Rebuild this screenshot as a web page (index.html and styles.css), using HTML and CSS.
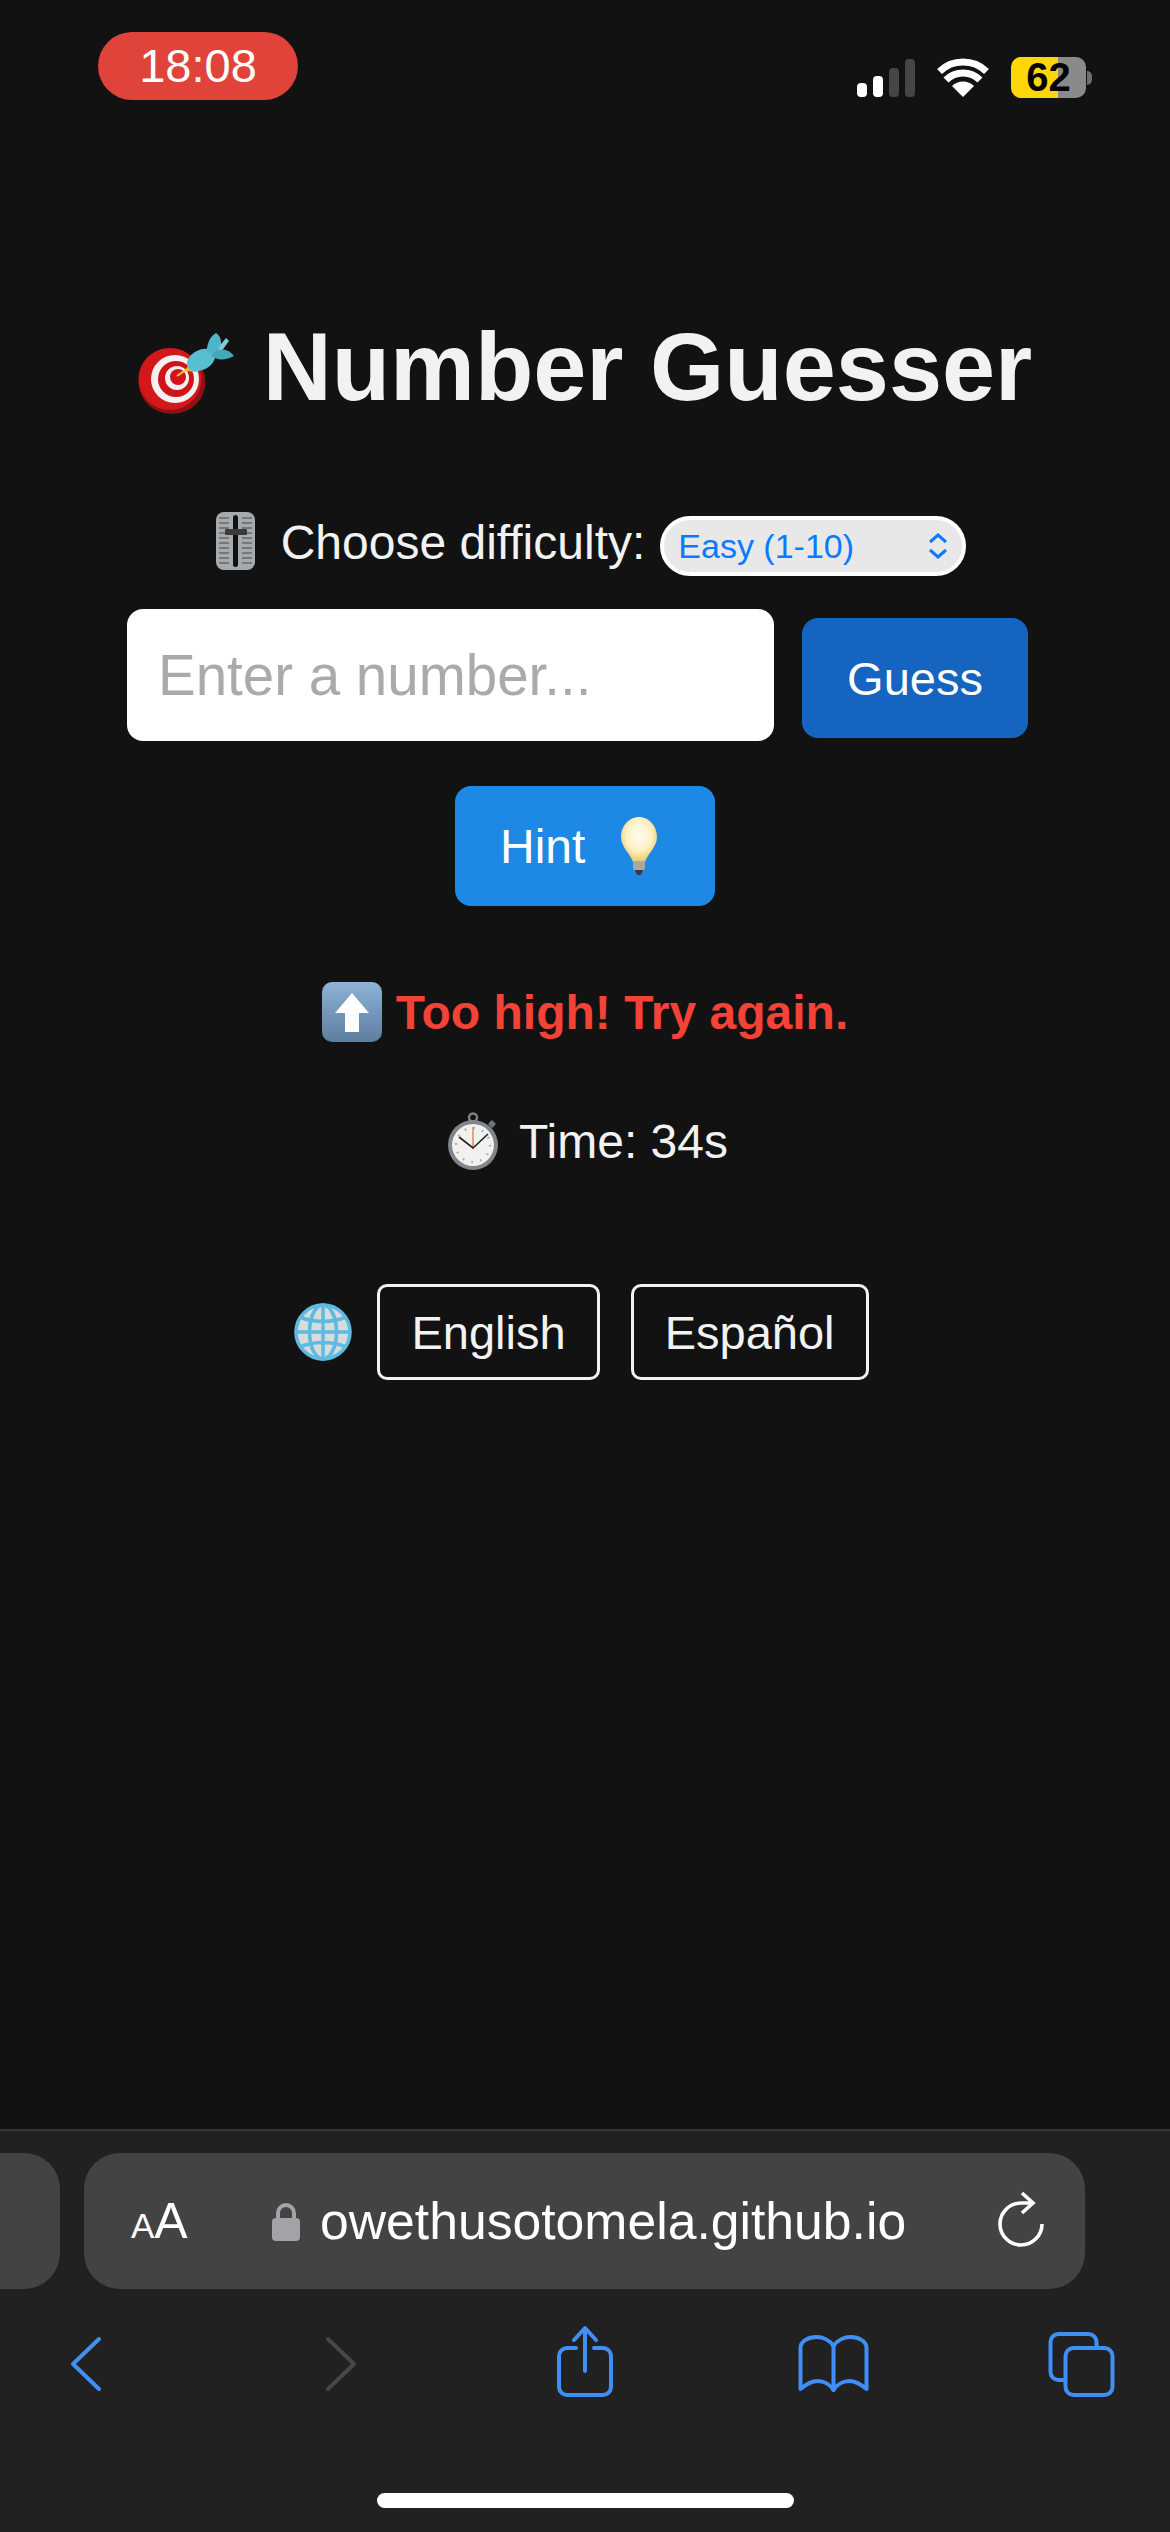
FILE: index.html
```html
<!DOCTYPE html>
<html lang="en">
<head>
    <meta charset="UTF-8">
    <meta name="viewport" content="width=device-width, initial-scale=1.0">
    <title>Number Guesser</title>
    <link rel="stylesheet" href="styles.css">
</head>
<body>
    <div class="status-bar">
        <div class="clock">18:08</div>
        <div class="status-icons">
            <div class="signal">
                <span class="bar bar-1"></span>
                <span class="bar bar-2"></span>
                <span class="bar bar-3 off"></span>
                <span class="bar bar-4 off"></span>
            </div>
            <svg class="wifi" width="52" height="40" viewBox="-1 0 52 40">
                <path d="M25 39 L14 28 A15.5 15.5 0 0 1 36 28 Z" fill="#fff"/>
                <path d="M8 22 A24 24 0 0 1 42 22" fill="none" stroke="#fff" stroke-width="7"/>
                <path d="M1.5 13.5 A34 34 0 0 1 48.5 13.5" fill="none" stroke="#fff" stroke-width="7"/>
            </svg>
            <div class="battery">62</div>
            <span class="battery-nub"></span>
        </div>
    </div>

    <div class="container">
        <div class="title-row">
            <svg class="title-icon" width="96" height="81" viewBox="8 12 96 81">
                <ellipse cx="42" cy="61" rx="33.5" ry="32" fill="#8f0f12"/>
                <ellipse cx="40" cy="58" rx="31.5" ry="31" fill="#d3181c"/>
                <circle cx="45" cy="58" r="24" fill="#f6f1f1"/>
                <circle cx="46" cy="58" r="18" fill="#cf1519"/>
                <circle cx="47" cy="57" r="12" fill="#f6f1f1"/>
                <circle cx="48" cy="56" r="8" fill="#cf1519"/>
                <path d="M47 55 L60 46" stroke="#f2cb3a" stroke-width="2"/>
                <path d="M55 50 L60 41 L67 51 Z" fill="#e8b820"/>
                <ellipse cx="71" cy="39" rx="15" ry="10" transform="rotate(-28 71 39)" fill="#58bfd0"/>
                <path d="M77 33 C76 24 80 15 86 12 C92 15 92 25 90 31 Z" fill="#4fb4c6"/>
                <path d="M88 27 L96 17 L99 20 L91 31 Z" fill="#7fcad6"/>
                <path d="M81 35 C88 26 98 27 104 35 C96 39 88 40 81 35 Z" fill="#43a8bb"/>
            </svg>
            <h1>Number Guesser</h1>
        </div>

        <div class="difficulty-row">
            <svg class="slider-icon" width="39" height="58" viewBox="0 0 39 58">
                <rect width="39" height="58" rx="8" fill="#a6aaad"/>
                <line x1="8" y1="5" x2="8" y2="54" stroke="#74787b" stroke-width="10" stroke-dasharray="2 3"/>
                <line x1="31" y1="5" x2="31" y2="54" stroke="#74787b" stroke-width="10" stroke-dasharray="2 3"/>
                <rect x="17" y="3" width="5" height="52" rx="2.5" fill="#111"/>
                <rect x="9" y="17" width="22" height="6" rx="1" fill="#3b3b3b"/>
            </svg>
            <label class="difficulty-label" for="difficulty">Choose difficulty:</label>
            <div class="select-wrap">
                <select id="difficulty">
                    <option>Easy (1-10)</option>
                    <option>Medium (1-50)</option>
                    <option>Hard (1-100)</option>
                </select>
                <svg class="select-arrows" width="22" height="28" viewBox="0 0 22 28">
                    <path d="M3 10 L11 3 L19 10 M3 18 L11 25 L19 18" fill="none" stroke="#0a7aff" stroke-width="3"/>
                </svg>
            </div>
        </div>

        <div class="guess-row">
            <input type="text" class="guess-input" placeholder="Enter a number...">
            <button class="btn btn-guess">Guess</button>
        </div>

        <button class="btn btn-hint">
            Hint
            <svg width="36" height="58" viewBox="0 0 36 58">
                <defs>
                    <radialGradient id="glow" cx="50%" cy="40%" r="60%">
                        <stop offset="0%" stop-color="#fffdf4"/>
                        <stop offset="60%" stop-color="#fdf0c0"/>
                        <stop offset="100%" stop-color="#eec766"/>
                    </radialGradient>
                </defs>
                <path d="M18 0 C28 0 36 9 36 20 C36 30 27 36 24 45 H12 C9 36 0 30 0 20 C0 9 8 0 18 0 Z" fill="url(#glow)"/>
                <rect x="12" y="44" width="12" height="9" rx="2" fill="#a9a9a2"/>
                <path d="M14 53 H22 L20 58 H16 Z" fill="#3b3b3b"/>
            </svg>
        </button>

        <div class="feedback">
            <svg width="60" height="60" viewBox="0 0 60 60">
                <defs>
                    <linearGradient id="arrowBox" x1="0" y1="0" x2="0" y2="1">
                        <stop offset="0%" stop-color="#8db3d6"/>
                        <stop offset="100%" stop-color="#5d7d9e"/>
                    </linearGradient>
                </defs>
                <rect width="60" height="60" rx="10" fill="url(#arrowBox)"/>
                <path d="M30 11 L47 31 H37 V50 H23 V31 H13 Z" fill="#fff"/>
            </svg>
            <span>Too high! Try again.</span>
        </div>

        <div class="timer">
            <svg width="51" height="58" viewBox="0 0 51 58">
                <circle cx="25" cy="5.5" r="4" fill="none" stroke="#7b8084" stroke-width="2.5"/>
                <rect x="22" y="8" width="6" height="5" fill="#8a8f93"/>
                <rect x="41" y="9" width="6" height="6" rx="1.5" transform="rotate(40 44 12)" fill="#6f7478"/>
                <circle cx="25" cy="33" r="25" fill="#80868c"/>
                <circle cx="25" cy="33" r="21" fill="#f1f1ef"/>
                <circle cx="25" cy="33" r="17" fill="none" stroke="#a9a9a9" stroke-width="2.5" stroke-dasharray="1.5 7.4"/>
                <path d="M25 15 V37" stroke="#e8734d" stroke-width="1.3"/>
                <path d="M11 25 L25 36 L40 22" fill="none" stroke="#222" stroke-width="1.6"/>
            </svg>
            <span>Time: 34s</span>
        </div>

        <div class="lang-row">
            <svg width="58" height="58" viewBox="0 0 58 58">
                <circle cx="29" cy="29" r="27" fill="#d9dadb"/>
                <g fill="none" stroke="#5cbbe0" stroke-width="3.6">
                    <circle cx="29" cy="29" r="27"/>
                    <ellipse cx="29" cy="29" rx="13.5" ry="27"/>
                    <path d="M29 2 V56 M2 29 H56 M6 14 C20 20 38 20 52 14 M6 44 C20 38 38 38 52 44"/>
                </g>
            </svg>
            <button class="btn-lang">English</button>
            <button class="btn-lang">Español</button>
        </div>
    </div>

    <div class="toolbar">
        <div class="url-row">
            <div class="tab-stub"></div>
            <div class="url-bar">
                <div class="aa"><span class="aa-small">A</span>A</div>
                <svg class="lock" width="28" height="38" viewBox="0 0 28 38">
                    <path d="M6 17 V10 A8 8 0 0 1 22 10 V17" fill="none" stroke="#a2a2a7" stroke-width="4"/>
                    <rect y="15" width="28" height="23" rx="4" fill="#a2a2a7"/>
                </svg>
                <span class="url">owethusotomela.github.io</span>
                <svg class="reload" width="50" height="60" viewBox="0 0 50 60">
                    <path d="M34 13 H24 A21 21 0 1 0 45 34" fill="none" stroke="#fff" stroke-width="3.6"/>
                    <path d="M25 3 L36 13 L25 23" fill="none" stroke="#fff" stroke-width="3.6"/>
                </svg>
            </div>
        </div>

        <div class="nav-row">
            <svg width="80" height="80" viewBox="0 0 80 80">
                <path d="M50 17 L24 42 L50 67" class="nav-stroke"/>
            </svg>
            <svg width="80" height="80" viewBox="0 0 80 80">
                <path d="M31 17 L57 42 L31 67" class="nav-stroke off"/>
            </svg>
            <svg width="80" height="80" viewBox="0 0 80 80">
                <path d="M31 26 H22 A8 8 0 0 0 14 34 V65 A8 8 0 0 0 22 73 H58 A8 8 0 0 0 66 65 V34 A8 8 0 0 0 58 26 H49" class="nav-stroke"/>
                <path d="M40 7 V49 M29 18 L40 6 L51 18" class="nav-stroke"/>
            </svg>
            <svg width="80" height="80" viewBox="-1.5 0 80 80">
                <path d="M39 24 C35 18 28 15 22 15 C14 15 6 19 6 26 V67 C12 62 18 59 23 59 C30 59 36 63 39 68" class="nav-stroke"/>
                <path d="M39 24 C43 18 50 15 56 15 C64 15 72 19 72 26 V67 C66 62 60 59 55 59 C48 59 42 63 39 68 V24" class="nav-stroke"/>
            </svg>
            <svg width="80" height="80" viewBox="-1.5 0 80 80">
                <path d="M54 24 V20 A8 8 0 0 0 46 12 H16 A8 8 0 0 0 8 20 V50 A8 8 0 0 0 16 58 H23" class="nav-stroke"/>
                <rect x="23" y="26" width="47" height="47" rx="8" class="nav-stroke"/>
            </svg>
        </div>

        <div class="home-indicator"></div>
    </div>
</body>
</html>
```

FILE: styles.css
```css
* {
    box-sizing: border-box;
}
body {
    margin: 0;
    height: 2532px;
    display: flex;
    flex-direction: column;
    font-family: 'Liberation Sans', Arial, sans-serif;
    background-color: #121212;
    color: #f2f2f2;
    overflow: hidden;
}
svg {
    display: block;
    flex-shrink: 0;
}

/* status bar */
.status-bar {
    height: 110px;
    padding: 32px 78px 0 98px;
    display: flex;
    justify-content: space-between;
    align-items: flex-start;
}
.clock {
    width: 200px;
    height: 68px;
    background: #e0433a;
    border-radius: 34px / 34px;
    color: #fff;
    font-size: 47px;
    line-height: 68px;
    text-align: center;
}
.status-icons {
    display: flex;
    align-items: center;
    margin-top: 25px;
}
.signal {
    display: flex;
    align-items: flex-end;
    gap: 6px;
    height: 38px;
    margin-right: 22px;
}
.bar {
    width: 10px;
    background: #fff;
    border-radius: 4px;
}
.bar.off {
    background: #454545;
}
.bar-1 { height: 14px; }
.bar-2 { height: 21px; }
.bar-3 { height: 29px; }
.bar-4 { height: 38px; }
.battery {
    width: 75px;
    height: 41px;
    margin-left: 22px;
    border-radius: 10px;
    background: linear-gradient(90deg, #ffd60a 47px, #8a8a8a 47px);
    color: #000;
    font-size: 40px;
    font-weight: 700;
    line-height: 41px;
    text-align: center;
}
.battery-nub {
    width: 5px;
    height: 14px;
    margin-left: 1px;
    background: #6e6e6e;
    border-radius: 0 8px 8px 0;
}

/* game */
.container {
    flex: 1;
    display: flex;
    flex-direction: column;
    align-items: center;
}
.title-row {
    margin-top: 202px;
    height: 110px;
    display: flex;
    align-items: center;
    gap: 29px;
}
.title-icon {
    margin-top: 12px;
}
h1 {
    margin: 0;
    font-size: 95.5px;
    line-height: 110px;
    font-weight: 700;
}
.difficulty-row {
    margin-top: 94px;
    padding-left: 12px;
    height: 60px;
    display: flex;
    align-items: center;
}
.slider-icon {
    margin-bottom: 10px;
}
.difficulty-label {
    margin: 0 15px 8px 26px;
    font-size: 48px;
}
.select-wrap {
    position: relative;
    width: 306px;
    height: 60px;
}
select {
    appearance: none;
    -webkit-appearance: none;
    width: 100%;
    height: 100%;
    padding: 0 0 0 14px;
    border: 4px solid #fff;
    border-radius: 30px;
    background: #e8e8e8;
    color: #0a7aff;
    font-family: inherit;
    font-size: 34px;
}
.select-arrows {
    position: absolute;
    top: 16px;
    right: 17px;
}
.guess-row {
    margin-top: 33px;
    padding-right: 15px;
    display: flex;
    align-items: center;
    gap: 28px;
}
.guess-input {
    width: 647px;
    height: 132px;
    padding: 0 31px;
    border: none;
    border-radius: 16px;
    background: #fff;
    color: #333;
    font-family: inherit;
    font-size: 56.5px;
}
.guess-input::placeholder {
    color: #aaa;
}
.btn {
    height: 120px;
    border: none;
    border-radius: 16px;
    color: #fff;
    font-family: inherit;
    font-size: 47px;
}
.btn-guess {
    width: 226px;
    margin-top: 6px;
    background-color: #1565c0;
}
.btn-hint {
    width: 260px;
    margin-top: 45px;
    padding-left: 45px;
    display: flex;
    align-items: center;
    gap: 36px;
    background-color: #1e88e5;
    font-size: 48px;
}
.feedback {
    margin-top: 76px;
    height: 60px;
    display: flex;
    align-items: center;
    gap: 14px;
    color: #f44336;
    font-size: 48px;
    font-weight: 700;
}
.timer {
    margin-top: 70px;
    padding-left: 6px;
    height: 58px;
    display: flex;
    align-items: center;
    gap: 20px;
    font-size: 48px;
}
.lang-row {
    margin-top: 114px;
    padding-right: 7px;
    display: flex;
    align-items: center;
}
.btn-lang {
    height: 96px;
    margin-left: 25px;
    padding: 0 31px;
    border: 3px solid #f2f2f2;
    border-radius: 10px;
    background: transparent;
    color: #f2f2f2;
    font-family: inherit;
    font-size: 47px;
}
.btn-lang:last-child {
    margin-left: 31px;
}

/* browser toolbar */
.toolbar {
    height: 403px;
    border-top: 2px solid #333;
    background-color: #212121;
    display: flex;
    flex-direction: column;
}
.url-row {
    margin-top: 22px;
    height: 136px;
    display: flex;
    gap: 24px;
}
.tab-stub {
    width: 60px;
    background: #434343;
    border-radius: 0 36px 36px 0;
}
.url-bar {
    width: 1001px;
    padding-left: 47px;
    background: #434343;
    border-radius: 36px;
    display: flex;
    align-items: center;
    color: #fff;
}
.aa {
    width: 57px;
    font-size: 50px;
    white-space: nowrap;
    line-height: 1;
}
.aa-small {
    font-size: 35px;
}
.lock {
    margin-left: 84px;
    margin-top: 2px;
}
.url {
    margin-left: 20px;
    width: 586px;
    font-size: 51.7px;
    white-space: nowrap;
}
.reload {
    margin-left: 91px;
    margin-top: -2px;
}
.nav-row {
    margin-top: 33px;
    display: flex;
    justify-content: center;
    gap: 168px;
}
.nav-stroke {
    fill: none;
    stroke: #3f8ff7;
    stroke-width: 4;
    stroke-linecap: round;
    stroke-linejoin: round;
}
.nav-stroke.off {
    stroke: #474747;
}
.home-indicator {
    width: 417px;
    height: 15px;
    margin: 91px auto 0;
    background: #fff;
    border-radius: 8px;
}
```
